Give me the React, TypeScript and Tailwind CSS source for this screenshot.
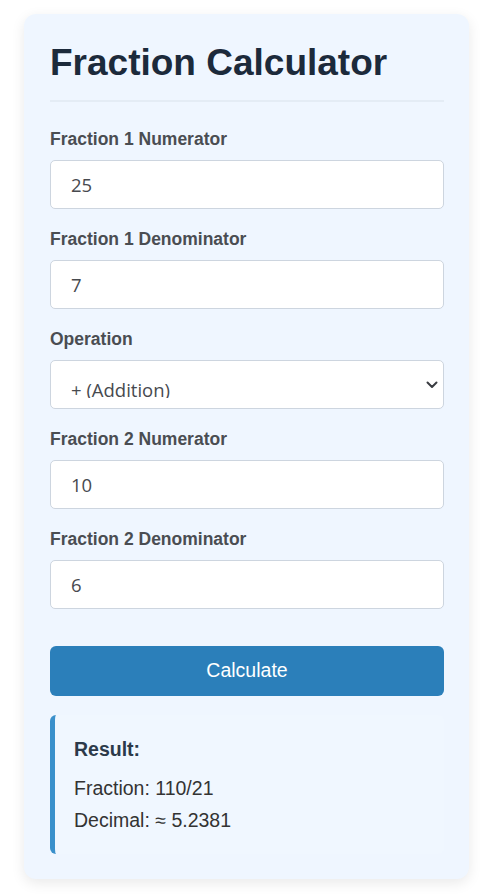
import React from 'react'

const fields = [
  { label: 'Fraction 1 Numerator', value: '25' },
  { label: 'Fraction 1 Denominator', value: '7' },
]
const fields2 = [
  { label: 'Fraction 2 Numerator', value: '10' },
  { label: 'Fraction 2 Denominator', value: '6' },
]

const labelCls = 'block h-[20px] text-[17.5px] leading-[20px] font-bold text-[#4a4d52] mb-[11px]'
const boxCls = 'h-[49px] w-full rounded-[5px] border border-[#cdd5df] bg-white'

function Field({ label, value }: { label: string; value: string }) {
  return (
    <div className="mb-[20px]">
      <label className={labelCls}>{label}</label>
      <div className={`${boxCls} flex items-center px-[20px] text-[18.5px] text-[#474a4f] font-['Open_Sans',sans-serif]`}>{value}</div>
    </div>
  )
}

export default function App() {
  return (
    <div className="min-h-[895px] bg-white pt-[14px] font-['Liberation_Sans',Arial,sans-serif]">
      <div className="ml-[24px] w-[445px] rounded-[12px] bg-[#eff6ff] pl-[26px] pr-[25px] pt-[27px] pb-[25px] shadow-[0_4px_14px_rgba(0,0,0,0.09)]">
        <h1 className="text-[37px] leading-[44px] font-bold text-[#1c2a3b]">Fraction Calculator</h1>
        <div className="mt-[15px] h-[2px] bg-[#e4ecf5]" />
        <div className="mt-[27px]">
          {fields.map(f => <Field key={f.label} {...f} />)}
          <div className="mb-[20px]">
            <label className={labelCls}>Operation</label>
            <div className={`${boxCls} flex items-start justify-between pl-[20px] pr-[5px] font-['Open_Sans',sans-serif] text-[18.5px] text-[#474a4f]`}>
              <div className="mt-[15px] h-[22px] overflow-hidden leading-normal">+ (Addition)</div>
              <svg className="mt-[20px]" width="12" height="8" viewBox="0 0 12 8" fill="none">
                <path d="M1.5 1.5 6 6l4.5-4.5" stroke="#3a3d42" strokeWidth="2" strokeLinecap="round" strokeLinejoin="round" />
              </svg>
            </div>
          </div>
          {fields2.map(f => <Field key={f.label} {...f} />)}
        </div>
        <button className="mt-[17px] h-[50px] w-full rounded-[6px] bg-[#2b7fba] text-[19.5px] text-white">Calculate</button>
        <div className="mt-[19px] rounded-[6px] border-l-[5px] border-[#3a90cb] bg-[#f0f7ff] pl-[19px] pt-[20px] pb-[18px]">
          <h3 className="text-[19.5px] leading-[28px] font-bold text-[#2c3a4a] mb-[9px]">Result:</h3>
          <p className="text-[19.5px] leading-[32px] text-[#333]">Fraction: 110/21</p>
          <p className="text-[19.5px] leading-[32px] text-[#333]">Decimal: ≈ 5.2381</p>
        </div>
      </div>
    </div>
  )
}
